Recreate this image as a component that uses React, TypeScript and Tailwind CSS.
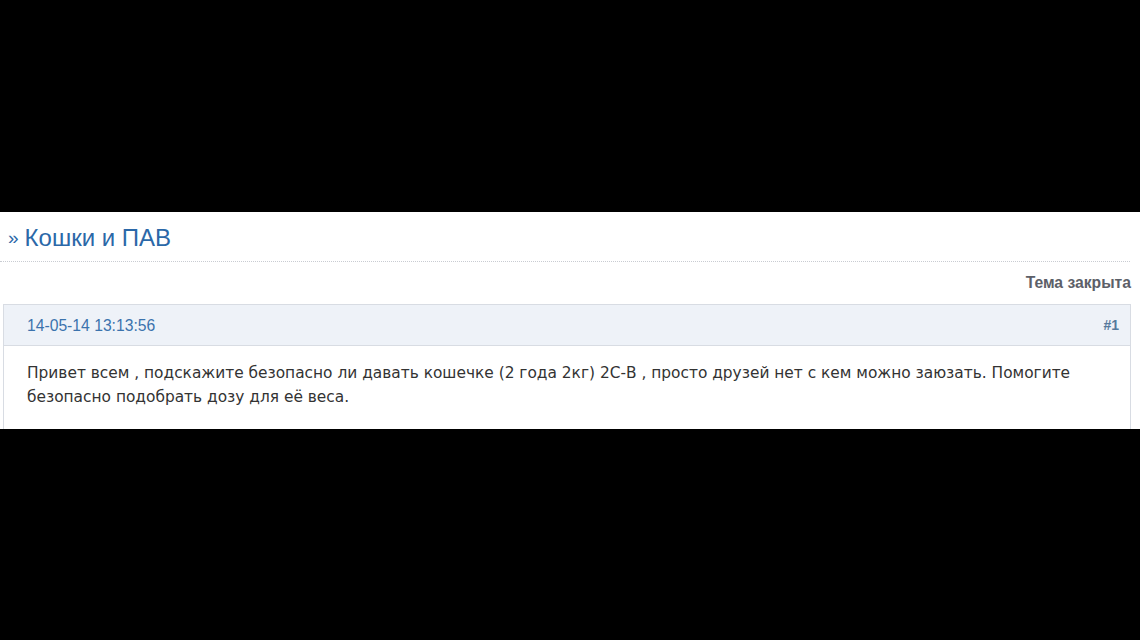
import React from "react";

const App: React.FC = () => {
  return (
    <div className="w-[1140px] h-[640px] bg-black flex flex-col overflow-hidden">
      <div className="h-[212px] shrink-0" />

      <div className="h-[217px] shrink-0 bg-white flex flex-col font-['Liberation_Sans',Arial,sans-serif]">
        <div className="h-[50px] mr-[10px] border-b border-dotted border-[#c9ccd2] flex items-center pl-[8px]">
          <h1 className="text-[24px] text-[#2b68a8] leading-none pt-[3px]">
            <span className="text-[19px] align-[2px] mr-[6px]">»</span>Кошки и ПАВ
          </h1>
        </div>

        <div className="h-[42px] flex items-center justify-end pr-[9px]">
          <span className="text-[15.7px] font-bold text-[#5c6068]">Тема закрыта</span>
        </div>

        <div className="ml-[3px] w-[1128px] flex-1 border border-[#d8dce3] border-b-0 flex flex-col">
          <div className="h-[41px] bg-[#eef2f8] border-b border-[#d8dce3] flex items-center justify-between pl-[23px] pr-[11px] pt-[1px]">
            <span className="text-[15.7px] text-[#3b73ad]">14-05-14 13:13:56</span>
            <span className="text-[14px] font-bold text-[#56799c]">#1</span>
          </div>
          <div className="pl-[23px] pr-[30px] pt-[15px] font-['DejaVu_Sans',Verdana,sans-serif] text-[15.4px] leading-[24px] text-[#333]">
            Привет всем , подскажите безопасно ли давать кошечке (2 года 2кг) 2С-В , просто друзей нет с кем можно заюзать. Помогите безопасно подобрать дозу для её веса.
          </div>
        </div>
      </div>

      <div className="flex-1" />
    </div>
  );
};

export default App;
